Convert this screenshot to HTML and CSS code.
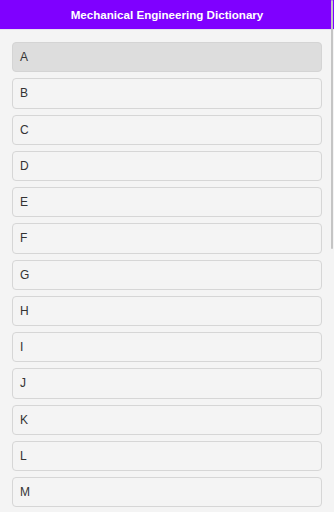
FILE: index.html
```html
<!DOCTYPE html>
<html lang="en">
<head>
<meta charset="utf-8">
<title>Mechanical Engineering Dictionary</title>
<link rel="stylesheet" href="styles.css">
</head>
<body>
<header class="app-header">Mechanical Engineering Dictionary</header>
<main class="letter-list">
  <div class="letter-item is-active">A</div>
  <div class="letter-item">B</div>
  <div class="letter-item">C</div>
  <div class="letter-item">D</div>
  <div class="letter-item">E</div>
  <div class="letter-item">F</div>
  <div class="letter-item">G</div>
  <div class="letter-item">H</div>
  <div class="letter-item">I</div>
  <div class="letter-item">J</div>
  <div class="letter-item">K</div>
  <div class="letter-item">L</div>
  <div class="letter-item">M</div>
  <div class="letter-item">N</div>
  <div class="letter-item">O</div>
  <div class="letter-item">P</div>
  <div class="letter-item">Q</div>
  <div class="letter-item">R</div>
  <div class="letter-item">S</div>
  <div class="letter-item">T</div>
  <div class="letter-item">U</div>
  <div class="letter-item">V</div>
  <div class="letter-item">W</div>
  <div class="letter-item">X</div>
  <div class="letter-item">Y</div>
  <div class="letter-item">Z</div>
</main>
<div class="scroll-thumb"></div>
</body>
</html>
```
FILE: styles.css
```css
html {
  scrollbar-width: none;
}
html::-webkit-scrollbar {
  width: 0;
  height: 0;
}
body {
  margin: 0;
  background: #f4f4f4;
  font-family: "Liberation Sans", Arial, sans-serif;
  color: #333;
}
.app-header {
  height: 29px;
  line-height: 29px;
  background: #7f00ff;
  color: #fff;
  font-weight: bold;
  font-size: 11.6px;
  text-align: center;
  border-bottom: 1px solid #e6e0ee;
}
.letter-list {
  display: flex;
  flex-direction: column;
  gap: 6px;
  padding: 12px 12px 40px;
}
.letter-item {
  height: 28.25px;
  line-height: 28px;
  padding: 0 7px;
  font-size: 12px;
  color: #333;
  background: #f4f4f4;
  border: 1px solid #d6d6d6;
  border-radius: 4px;
}
.letter-item.is-active {
  background: #dddddd;
  border-color: #d4d4d4;
}
.scroll-thumb {
  position: fixed;
  top: 0;
  right: 1px;
  width: 2px;
  height: 249px;
  background: #c4c4c4;
  border-radius: 1px;
}
```
